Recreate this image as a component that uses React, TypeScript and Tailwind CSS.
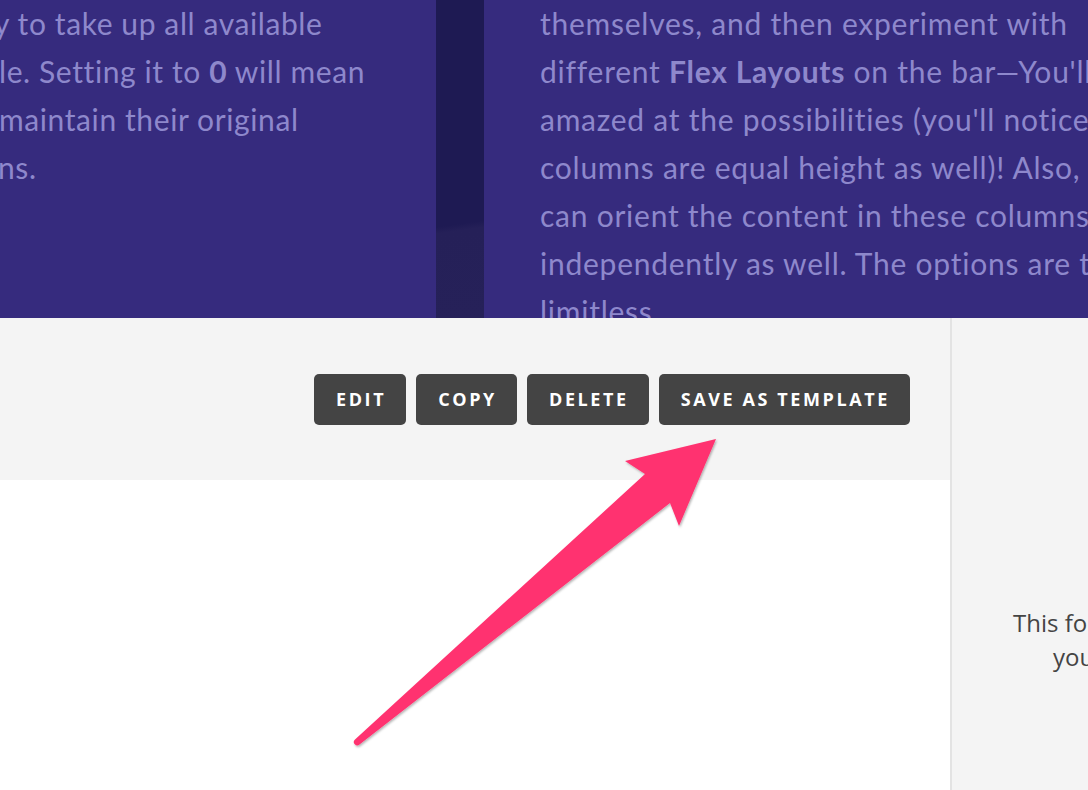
import React from "react";

const lato = { fontFamily: "Lato, 'Open Sans', sans-serif" };

export default function App() {
  const rightLines: React.ReactNode[] = [
    "themselves, and then experiment with",
    <>different <b className="font-bold">Flex Layouts</b> on the bar—You'll be</>,
    "amazed at the possibilities (you'll notice the",
    "columns are equal height as well)! Also, you",
    "can orient the content in these columns",
    "independently as well. The options are truly",
    "limitless.",
  ];
  return (
    <div className="relative w-[1088px] h-[790px] overflow-hidden bg-white">
      {/* Top purple preview */}
      <div className="flex h-[318px] bg-[#362b7e] overflow-hidden" style={lato}>
        <div className="w-[436px] shrink-0 overflow-hidden text-[30px] leading-[48px] tracking-[0.6px] text-[#8e88cc] -mt-[1px]">
          <div className="whitespace-nowrap -ml-[6px]">y to take up all available</div>
          <div className="whitespace-nowrap -ml-[1px]">le. Setting it to <b className="font-bold">0</b> will mean</div>
          <div className="whitespace-nowrap -ml-[1px]">maintain their original</div>
          <div className="whitespace-nowrap -ml-[2px]">ns.</div>
        </div>
        <div className="w-[48px] shrink-0 bg-[linear-gradient(172deg,#1e1a53_0%,#1e1a53_70%,#252058_72%,#262159_100%)]" />
        <div className="flex-1 overflow-hidden pl-[56px] text-[30px] leading-[48px] tracking-[0.75px] text-[#8e88cc] -mt-[1px]">
          {rightLines.map((l, i) => (
            <div key={i} className="whitespace-nowrap">{l}</div>
          ))}
        </div>
      </div>

      {/* Bottom area */}
      <div className="flex h-[472px]">
        <div className="w-[950px] shrink-0 flex flex-col">
          <div className="h-[162px] bg-[#f4f4f4] flex items-center justify-end pr-[40px] gap-[10px]" style={{ fontFamily: "'Open Sans', sans-serif" }}>
            {["EDIT", "COPY", "DELETE", "SAVE AS TEMPLATE"].map((t) => (
              <button
                key={t}
                className="h-[51px] pl-[22px] pr-[20px] rounded-[5px] bg-[#444444] text-white font-bold text-[18px] tracking-[2.6px] whitespace-nowrap"
              >
                {t}
              </button>
            ))}
          </div>
          <div className="flex-1 bg-white" />
        </div>
        <div className="flex-1 bg-[#f4f4f4] border-l-2 border-[#e3e3e3] overflow-hidden text-[24px] leading-[34px] text-[#444444] pt-[288px]" style={{ fontFamily: "'Open Sans', sans-serif" }}>
          <div className="whitespace-nowrap pl-[61px]">This form is empty.</div>
          <div className="whitespace-nowrap pl-[101px]">you can add content</div>
        </div>
      </div>

      {/* Arrow annotation */}
      <svg className="absolute inset-0 pointer-events-none" width="1088" height="790" viewBox="0 0 1088 790">
        <defs>
          <filter id="sh" x="-10%" y="-10%" width="120%" height="120%">
            <feDropShadow dx="1" dy="1.5" stdDeviation="1" floodColor="#000" floodOpacity="0.3" />
          </filter>
        </defs>
        <path
          d="M 645 474 L 625 461 L 716 439 L 679 526 L 670 503 L 359.5 744.5 A 3 3 0 0 1 355 739.5 Z"
          fill="#ff3370"
          filter="url(#sh)"
        />
      </svg>
    </div>
  );
}
